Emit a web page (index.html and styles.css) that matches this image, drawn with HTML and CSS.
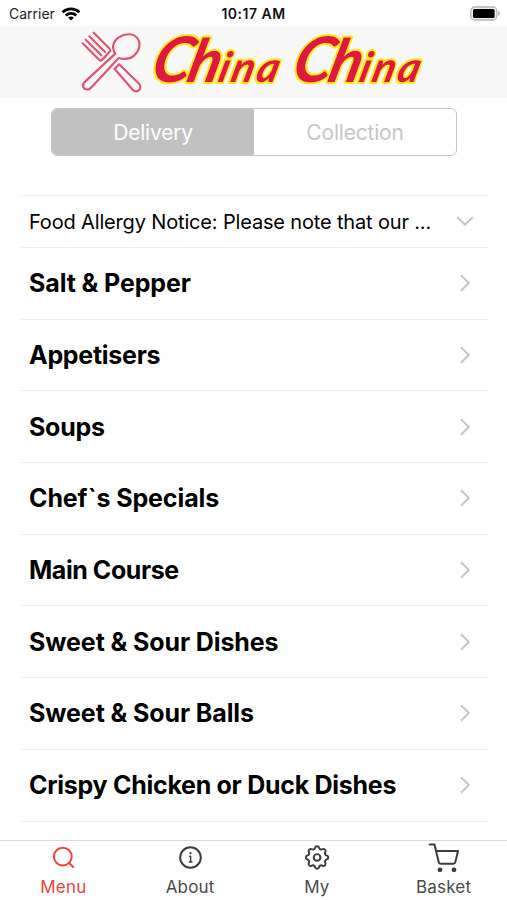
FILE: index.html
```html
<!DOCTYPE html>
<html lang="en">
<head>
    <meta charset="UTF-8">
    <title>China China</title>
    <meta name="viewport" content="width=device-width, initial-scale=1.0">
    <link rel="stylesheet" href="styles.css">
</head>
<body>

    <div class="status-bar">
        <div class="carrier">
            <span>Carrier</span>
            <svg width="20" height="14" viewBox="0 0 20 14" fill="none" stroke="#000" stroke-width="2.7">
                <path d="M1.6 5.2C6.4.7 13.6.7 18.4 5.2"/>
                <path d="M4.7 8.4c3-2.8 7.6-2.8 10.6 0"/>
                <path d="M10 13.6 7.1 10.7c1.7-1.5 4.1-1.5 5.8 0z" fill="#000" stroke="none"/>
            </svg>
        </div>
        <div class="time">10:17 AM</div>
        <svg class="battery" width="32" height="16" viewBox="0 0 32 16">
            <rect x="1.8" y="1" width="26" height="13" rx="4" fill="#eee" stroke="#b5b5b5" stroke-width="1.3"/>
            <rect x="4" y="3" width="21.6" height="9" rx="1.6" fill="#000"/>
            <path d="M29.2 5v5c2.4-1 2.4-4 0-5z" fill="#b5b5b5"/>
        </svg>
    </div>

    <header class="header">
        <svg width="507" height="72" viewBox="0 26 507 72">
            <svg x="81" y="31" width="61" height="62" viewBox="33 18 183 186">
                <g class="cutlery">
                    <path d="M136 86C123 67 130 48 146 37c18-12 43-13 55 1 13 16 8 38-8 53-13 11-30 13-47 8L63 188c-7 8-19 7-23-2-3-8 1-13 6-17z"/>
                    <path d="M38 55l44 44q7 8 11 8l28-29q1-4-5-10L71 23M47 44l47 47M58 34l47 47M93 107l14 -13"/>
                    <path d="M134 132l13-14 59 57c8 8 6 18-1 22-6 3-12 2-17-3z"/>
                </g>
            </svg>
            <g class="logo">
                <text transform="translate(149 82) skewX(-14)"><tspan class="cap">C</tspan><tspan class="tall" dx="-3">h</tspan><tspan class="low" dx="-1">ina</tspan></text>
                <text transform="translate(290 82) skewX(-14)"><tspan class="cap">C</tspan><tspan class="tall" dx="-3">h</tspan><tspan class="low" dx="-1">ina</tspan></text>
            </g>
        </svg>
    </header>

    <div class="segment">
        <div class="segment-item active">Delivery</div>
        <div class="segment-item">Collection</div>
    </div>

    <main class="menu">
        <div class="notice">
            <span>Food Allergy Notice: Please note that our ...</span>
            <svg class="arrow" width="18" height="18" viewBox="0 0 18 18"><path d="M1.2 4 9 11.8 16.8 4"/></svg>
        </div>
        <div class="row wide"><span>Salt &amp; Pepper</span><svg class="arrow" width="18" height="18" viewBox="0 0 18 18"><path d="M5 1.2 12.8 9 5 16.8"/></svg></div>
        <div class="row"><span>Appetisers</span><svg class="arrow" width="18" height="18" viewBox="0 0 18 18"><path d="M5 1.2 12.8 9 5 16.8"/></svg></div>
        <div class="row"><span>Soups</span><svg class="arrow" width="18" height="18" viewBox="0 0 18 18"><path d="M5 1.2 12.8 9 5 16.8"/></svg></div>
        <div class="row wide"><span>Chef`s Specials</span><svg class="arrow" width="18" height="18" viewBox="0 0 18 18"><path d="M5 1.2 12.8 9 5 16.8"/></svg></div>
        <div class="row tight"><span>Main Course</span><svg class="arrow" width="18" height="18" viewBox="0 0 18 18"><path d="M5 1.2 12.8 9 5 16.8"/></svg></div>
        <div class="row wide"><span>Sweet &amp; Sour Dishes</span><svg class="arrow" width="18" height="18" viewBox="0 0 18 18"><path d="M5 1.2 12.8 9 5 16.8"/></svg></div>
        <div class="row wide"><span>Sweet &amp; Sour Balls</span><svg class="arrow" width="18" height="18" viewBox="0 0 18 18"><path d="M5 1.2 12.8 9 5 16.8"/></svg></div>
        <div class="row"><span>Crispy Chicken or Duck Dishes</span><svg class="arrow" width="18" height="18" viewBox="0 0 18 18"><path d="M5 1.2 12.8 9 5 16.8"/></svg></div>
    </main>

    <nav class="tabs">
        <div class="tab active">
            <svg width="34" height="34" viewBox="0 0 34 34">
                <circle cx="16.8" cy="15.6" r="8.9"/>
                <path d="M23 21.8l4.2 4.2"/>
            </svg>
            <span>Menu</span>
        </div>
        <div class="tab">
            <svg width="34" height="34" viewBox="0 0 34 34">
                <circle cx="17.5" cy="16.5" r="10.3"/>
                <path d="M16.6 15.3h1v5.4M16.3 20.9h2.6" stroke-width="1.5"/>
                <circle cx="17.5" cy="12.2" r="1.1" fill="#3c3c3c" stroke="none"/>
            </svg>
            <span>About</span>
        </div>
        <div class="tab">
            <svg width="34" height="34" viewBox="0 0 34 34">
                <g transform="translate(2.2 1.6) scale(1.24)" stroke-width="1.6">
                    <path d="M10.325 4.317c.426-1.756 2.924-1.756 3.35 0a1.724 1.724 0 0 0 2.573 1.066c1.543-.94 3.31.826 2.37 2.37a1.724 1.724 0 0 0 1.065 2.572c1.756.426 1.756 2.924 0 3.35a1.724 1.724 0 0 0-1.066 2.573c.94 1.543-.826 3.31-2.37 2.37a1.724 1.724 0 0 0-2.572 1.065c-.426 1.756-2.924 1.756-3.35 0a1.724 1.724 0 0 0-2.573-1.066c-1.543.94-3.31-.826-2.37-2.37a1.724 1.724 0 0 0-1.065-2.572c-1.756-.426-1.756-2.924 0-3.35a1.724 1.724 0 0 0 1.066-2.573c-.94-1.543.826-3.31 2.37-2.37.996.608 2.296.07 2.572-1.065z"/>
                    <circle cx="12" cy="12" r="2.7"/>
                </g>
            </svg>
            <span>My</span>
        </div>
        <div class="tab">
            <svg width="34" height="34" viewBox="0 0 34 34">
                <path d="M2.7 3.4h4.8l4.2 17.5q.4 1.8 2 1.8h12.6q1.7 0 2.1-1.8L31 10H9.2"/>
                <circle cx="13" cy="28.8" r="2.4" fill="#3c3c3c" stroke="none"/>
                <circle cx="27" cy="28.8" r="2.4" fill="#3c3c3c" stroke="none"/>
            </svg>
            <span>Basket</span>
        </div>
    </nav>

</body>
</html>
```
FILE: styles.css
```css
* {
    margin: 0;
    padding: 0;
    box-sizing: border-box;
}

body {
    font-family: Inter, "Liberation Sans", sans-serif;
    background-color: #fff;
    color: #000;
    height: 900px;
    display: flex;
    flex-direction: column;
    overflow: hidden;
}

/* Status bar */
.status-bar {
    height: 26px;
    flex: none;
    display: grid;
    grid-template-columns: 1fr auto 1fr;
    align-items: center;
    padding: 1px 6px 0 9px;
    font-size: 14px;
}

.carrier {
    display: flex;
    align-items: center;
    gap: 6px;
    color: #222;
}

.time {
    font-weight: 600;
    color: #111;
    letter-spacing: 0.5px;
    margin-right: 3px;
}

.battery {
    justify-self: end;
}

/* Logo */
.header {
    height: 72px;
    flex: none;
    background-color: #f7f7f7;
}

.header svg {
    display: block;
    overflow: visible;
}

.cutlery {
    fill: none;
    stroke: #e05472;
    stroke-width: 6.5;
    stroke-linecap: round;
    stroke-linejoin: round;
}

.logo {
    font-family: Lato, "Liberation Sans", sans-serif;
    font-style: italic;
    font-weight: bold;
    font-size: 41px;
    fill: #e0173f;
    stroke: #ffea1c;
    stroke-width: 4px;
    stroke-linejoin: round;
    paint-order: stroke;
}

.logo .cap {
    font-size: 63px;
}

.logo .tall {
    font-size: 60px;
}

.logo .low {
    font-size: 42px;
    letter-spacing: 2.5px;
}

/* Delivery / Collection */
.segment {
    display: flex;
    flex: none;
    width: 406px;
    height: 48px;
    margin: 10px 0 39px 51px;
    border: 1.5px solid #c6c6c6;
    border-radius: 6px;
    overflow: hidden;
}

.segment-item {
    flex: 1;
    display: flex;
    align-items: center;
    justify-content: center;
    font-size: 21px;
    letter-spacing: -0.2px;
    color: #c6c6c6;
}

.segment-item.active {
    background-color: #c1c1c1;
    color: #fff;
}

/* Menu list */
.menu {
    flex: 1;
    margin: 0 19px 0 20px;
    border-top: 1px solid #f0f0f0;
}

.notice, .row {
    display: flex;
    align-items: center;
    justify-content: space-between;
    padding: 0 14px 0 9px;
    border-bottom: 1px solid #f0f0f0;
    white-space: nowrap;
}

.notice {
    height: 52px;
    font-size: 20px;
    letter-spacing: -0.16px;
}

.row {
    height: 71.7px;
    font-size: 25px;
    font-weight: 700;
    letter-spacing: -0.28px;
}

.row.wide {
    letter-spacing: -0.11px;
}

.row.tight {
    letter-spacing: -0.44px;
}

.arrow {
    fill: none;
    stroke: #c6c6c6;
    stroke-width: 2;
}

/* Bottom tabs */
.tabs {
    display: flex;
    flex: none;
    height: 60px;
    border-top: 1px solid #d9d9d9;
}

.tab {
    flex: 1;
    display: flex;
    flex-direction: column;
    align-items: center;
    font-size: 17px;
    line-height: 25px;
    letter-spacing: 0.2px;
    color: #4a4a4a;
}

.tab svg {
    fill: none;
    stroke: #3c3c3c;
    stroke-width: 2;
    stroke-linecap: round;
    stroke-linejoin: round;
}

.tab.active {
    color: #e8453c;
}

.tab.active svg {
    stroke: #e8453c;
}
```
